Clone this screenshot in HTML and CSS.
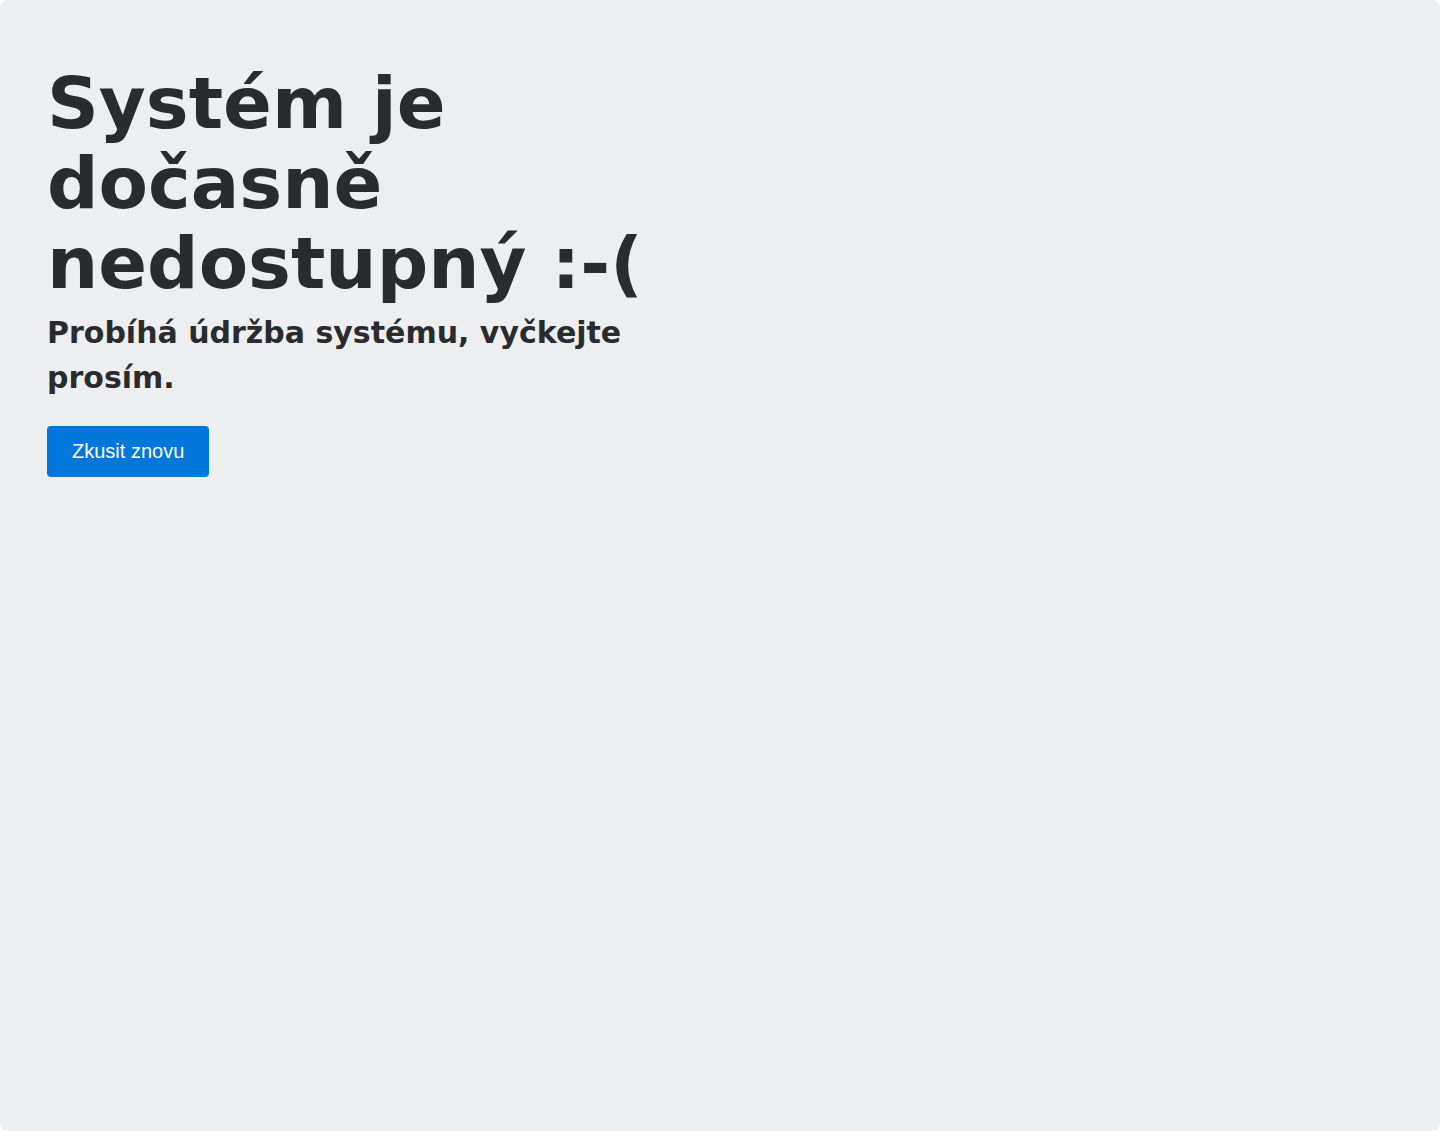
FILE: index.html
```html
<!DOCTYPE html>
<html lang="cs">
<head>
  <meta charset="utf-8">
  <title>Údržba systému</title>
  <meta name="viewport" content="width=device-width, initial-scale=1.0">
  <link rel="stylesheet" href="styles.css">
</head>
<body>
  <div class="page">
    <div class="content">
      <h1>Systém je dočasně nedostupný :-(</h1>
      <h2>Probíhá údržba systému, vyčkejte prosím.</h2>
      <button type="button" class="retry" onclick="location.reload()">Zkusit znovu</button>
    </div>
  </div>
</body>
</html>
```

FILE: styles.css
```css
html, body {
  margin: 0;
  background-color: #ffffff;
}

.page {
  box-sizing: border-box;
  min-height: 100vh;
  background-color: #edeef0;
  border-radius: 8px;
  padding: 63px 47px;
  font-family: 'DejaVu Sans', sans-serif;
  color: #2a2b2e;
}

.content {
  max-width: 640px;
}

h1 {
  font-size: 72px;
  line-height: 80px;
  font-weight: bold;
  margin: 0;
}

h2 {
  font-size: 30px;
  line-height: 45px;
  font-weight: bold;
  margin: 7px 0 0;
}

.retry {
  margin-top: 26px;
  background-color: #0277db;
  color: #ffffff;
  border: none;
  border-radius: 4px;
  padding: 14px 25px;
  font-family: 'Liberation Sans', Arial, sans-serif;
  font-size: 20px;
  line-height: 23px;
  cursor: pointer;
}

.retry:hover {
  background-color: #0266bd;
}
```
